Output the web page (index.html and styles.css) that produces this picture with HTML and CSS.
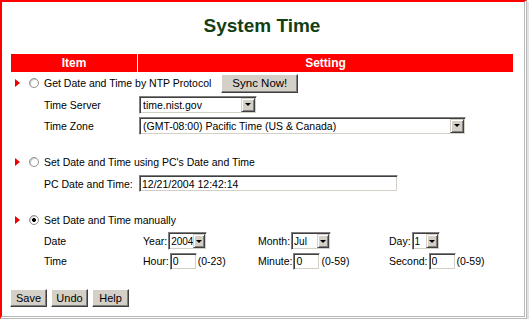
FILE: index.html
```html
<!DOCTYPE html>
<html lang="en">
<head>
    <meta charset="UTF-8">
    <title>System Time</title>
    <link rel="stylesheet" href="styles.css">
</head>
<body>
    <div class="frame">
        <h1 class="title">System Time</h1>
        <div class="head">
            <div>Item</div>
            <div>Setting</div>
        </div>
        <form class="settings" id="timeForm">
            <div class="opt">
                <span class="mark"></span>
                <input type="radio" name="mode" value="ntp">
                <span class="opt-text">Get Date and Time by NTP Protocol</span>
                <button type="button" class="btn sync">Sync Now!</button>
            </div>
            <div class="field">
                <span class="label">Time Server</span>
                <span class="select w-server"><select><option>time.nist.gov</option></select><span class="drop"></span></span>
            </div>
            <div class="field">
                <span class="label">Time Zone</span>
                <span class="select w-zone"><select><option>(GMT-08:00) Pacific Time (US &amp; Canada)</option></select><span class="drop"></span></span>
            </div>
            <div class="spacer"></div>

            <div class="opt">
                <span class="mark"></span>
                <input type="radio" name="mode" value="pc">
                <span class="opt-text">Set Date and Time using PC's Date and Time</span>
            </div>
            <div class="field">
                <span class="label">PC Date and Time:</span>
                <span><input type="text" class="text w-pc" value="12/21/2004 12:42:14"></span>
            </div>
            <div class="spacer"></div>

            <div class="opt">
                <span class="mark"></span>
                <input type="radio" name="mode" value="manual" checked>
                <span class="opt-text">Set Date and Time manually</span>
            </div>
            <div class="field part-row">
                <span class="label">Date</span>
                <div class="parts">
                    <span class="part">Year:<span class="select small w-year"><select><option>2004</option></select><span class="drop"></span></span></span>
                    <span class="part">Month:<span class="select small w-month"><select><option>Jul</option></select><span class="drop"></span></span></span>
                    <span class="part">Day:<span class="select small w-day"><select><option>1</option></select><span class="drop"></span></span></span>
                </div>
            </div>
            <div class="field part-row">
                <span class="label">Time</span>
                <div class="parts">
                    <span class="part">Hour:<input type="text" class="text w-num" value="0"><span class="range">(0-23)</span></span>
                    <span class="part">Minute:<input type="text" class="text w-num" value="0"><span class="range">(0-59)</span></span>
                    <span class="part">Second:<input type="text" class="text w-num" value="0"><span class="range">(0-59)</span></span>
                </div>
            </div>

            <div class="actions">
                <button type="button" class="btn">Save</button>
                <button type="button" class="btn">Undo</button>
                <button type="button" class="btn">Help</button>
            </div>
        </form>
    </div>
</body>
</html>
```

FILE: styles.css
```css
body {
    margin: 0;
    font-family: "Liberation Sans", Arial, sans-serif;
    font-size: 10.5px;
    color: #000;
    background: #fff;
}
.frame {
    width: 513px;
    height: 314px;
    padding: 0 0 0 9px;
    border-top: 2px solid #f00;
    border-left: 2px solid #f00;
    border-right: 3px double #b8b8b8;
    border-bottom: 3px double #b8b8b8;
    box-shadow: 2px 2px 0 #e2e2e2;
}
.title {
    margin: 0;
    height: 52px;
    line-height: 48px;
    text-align: center;
    font-size: 19px;
    font-weight: bold;
    color: #143f14;
    width: 502px;
}
.head {
    display: grid;
    grid-template-columns: 126px 375px;
    column-gap: 1px;
    height: 18px;
}
.head div {
    background: #f00;
    color: #fff;
    font-weight: bold;
    font-size: 12px;
    line-height: 18px;
    text-align: center;
}
.opt {
    display: flex;
    align-items: center;
    height: 22px;
    padding-left: 4px;
}
.mark {
    width: 0;
    height: 0;
    border-left: 5px solid #e00;
    border-top: 4.5px solid transparent;
    border-bottom: 4.5px solid transparent;
}
.opt input[type="radio"] {
    appearance: none;
    width: 10px;
    height: 10px;
    margin: 0 0 0 9px;
    border: 1px solid #909090;
    border-radius: 50%;
    background: #fff;
    box-shadow: inset 1px 1px 0 #c8c8c8;
}
.opt input[type="radio"]:checked {
    background: radial-gradient(circle, #000 0 1.8px, #fff 2.2px);
}
.opt-text {
    margin-left: 5px;
}
.field {
    display: grid;
    grid-template-columns: 128px 1fr;
    align-items: center;
    height: 21px;
}
.part-row {
    height: 20px;
}
.label {
    padding-left: 33px;
}
.spacer {
    height: 15px;
}
.select {
    display: inline-flex;
    box-sizing: border-box;
    height: 18px;
    vertical-align: middle;
    border: 1px solid;
    border-color: #808080 #fff #fff #808080;
    box-shadow: inset 1px 1px 0 #404040, inset -1px -1px 0 #d4d0c8;
    padding: 1px;
    background: #fff;
}
.select select {
    appearance: none;
    flex: 1;
    min-width: 0;
    border: none;
    outline: none;
    background: transparent;
    font: inherit;
    padding: 0 0 0 2px;
    color: #000;
}
.select.small select {
    font-size: 10px;
    padding-left: 1px;
}
.drop {
    width: 14px;
    flex: none;
    box-sizing: border-box;
    background: #d4d0c8;
    border: 1px solid;
    border-color: #d4d0c8 #404040 #404040 #d4d0c8;
    box-shadow: inset 1px 1px 0 #fff, inset -1px -1px 0 #808080;
    display: flex;
    align-items: center;
    justify-content: center;
}
.select.small .drop {
    width: 12px;
}
.drop::after {
    content: "";
    border-top: 3px solid #000;
    border-left: 3px solid transparent;
    border-right: 3px solid transparent;
}
.w-server { width: 118px; }
.w-zone { width: 327px; }
.w-year { width: 39px; }
.w-month { width: 40px; }
.w-day { width: 28px; }
.text {
    box-sizing: border-box;
    height: 17px;
    padding: 0 2px;
    font: inherit;
    vertical-align: middle;
    border: 1px solid;
    border-color: #808080 #fff #fff #808080;
    box-shadow: inset 1px 1px 0 #404040, inset -1px -1px 0 #d4d0c8;
    background: #fff;
    outline: none;
}
.w-pc { width: 259px; }
.w-num { width: 27px; }
.parts {
    display: grid;
    grid-template-columns: 119px 131px auto;
    align-items: center;
}
.part {
    display: flex;
    align-items: center;
}
.parts .part:first-child {
    padding-left: 4px;
}
.part .select, .part .text {
    margin-left: 1px;
}
.range {
    margin-left: 1px;
}
.btn {
    background: #d4d0c8;
    font-family: "Liberation Sans", Arial, sans-serif;
    font-size: 11px;
    color: #000;
    border: 1px solid;
    border-color: #fff #404040 #404040 #fff;
    box-shadow: inset -1px -1px 0 #808080;
    padding: 0 5px;
    height: 19px;
    cursor: pointer;
}
.sync {
    width: 77px;
    margin-left: 10px;
    font-size: 11.5px;
}
.actions {
    display: flex;
    gap: 4px;
    margin: 18px 0 0 -1px;
}
.actions .btn {
    width: 37px;
    height: 18px;
    padding: 0;
}
```
